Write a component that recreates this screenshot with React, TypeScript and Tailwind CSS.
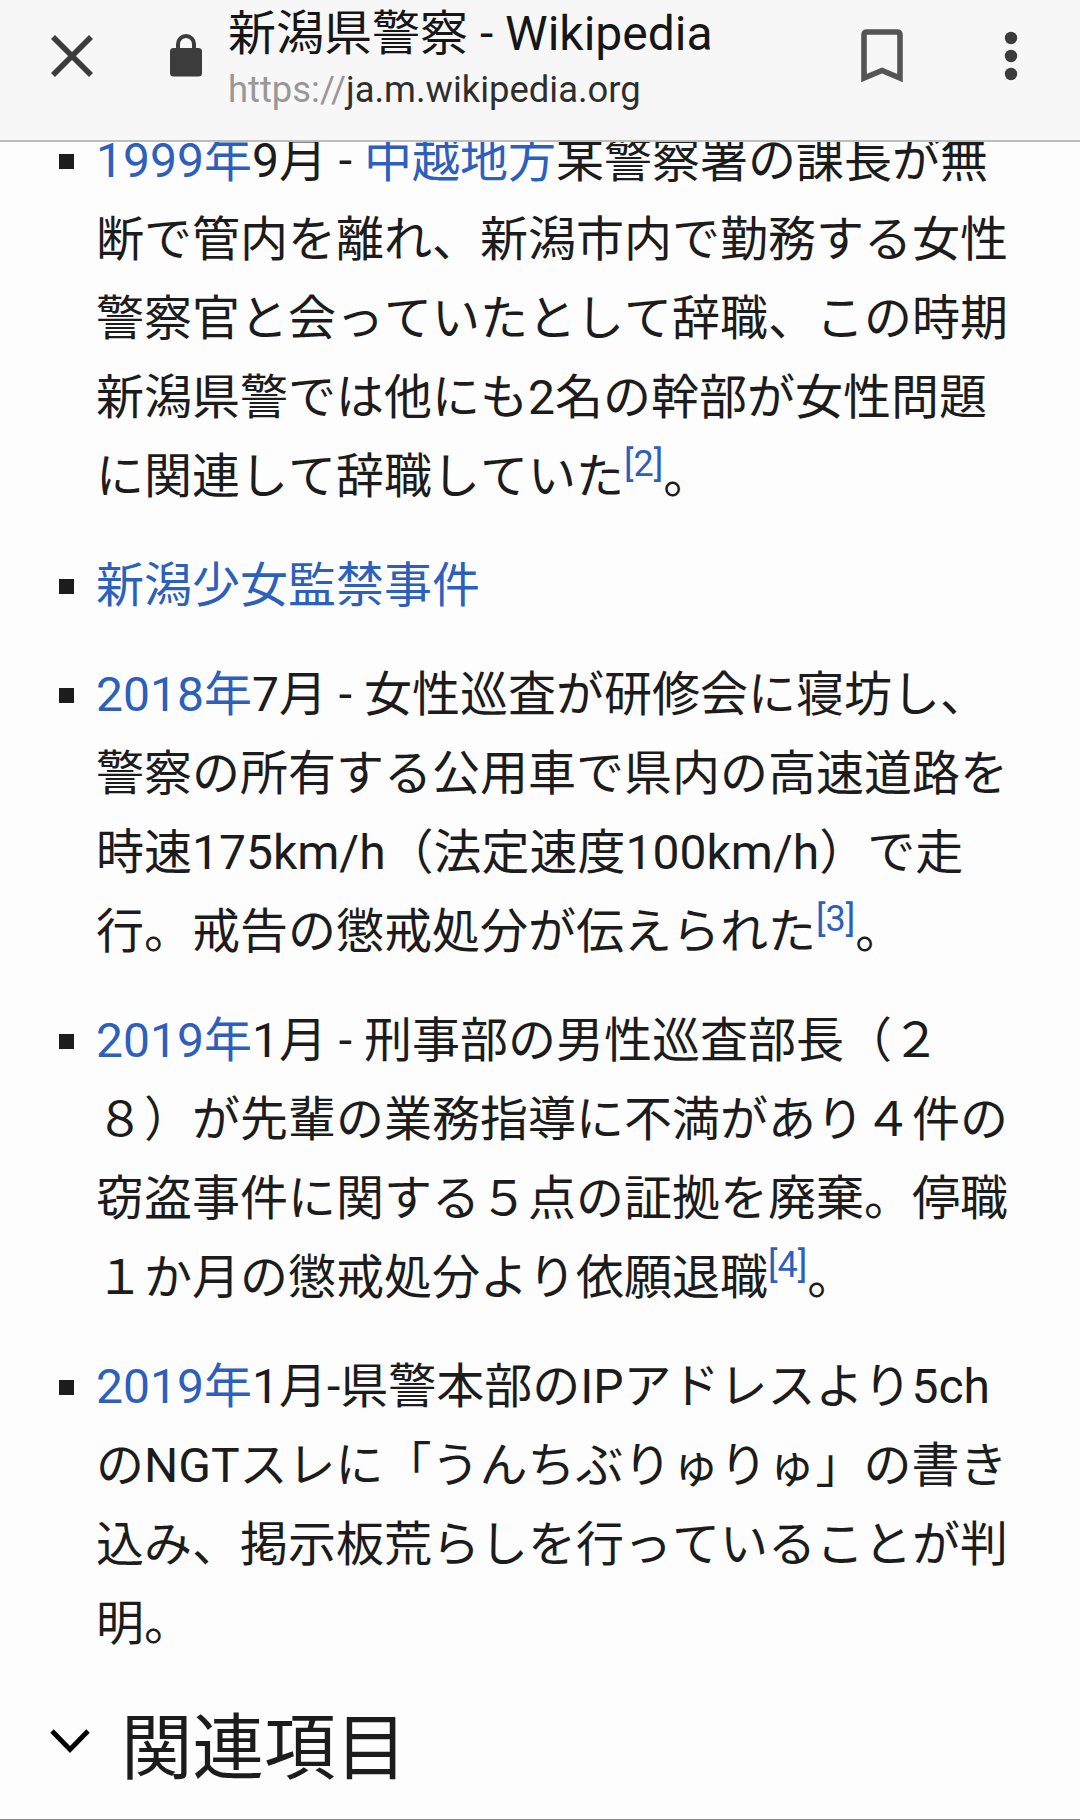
import React from 'react';

type Part = {
  text: string;
  type?: 'link' | 'ref';
};

const listHistory: Part[][][] = [
  [
    [
      { text: '1999年', type: 'link' },
      { text: '9月 - ' },
      { text: '中越地方', type: 'link' },
      { text: '某警察署の課長が無' },
    ],
    [{ text: '断で管内を離れ、新潟市内で勤務する女性' }],
    [{ text: '警察官と会っていたとして辞職、この時期' }],
    [{ text: '新潟県警では他にも2名の幹部が女性問題' }],
    [
      { text: 'に関連して辞職していた' },
      { text: '[2]', type: 'ref' },
      { text: '。' },
    ],
  ],
  [[{ text: '新潟少女監禁事件', type: 'link' }]],
  [
    [
      { text: '2018年', type: 'link' },
      { text: '7月 - 女性巡査が研修会に寝坊し、' },
    ],
    [{ text: '警察の所有する公用車で県内の高速道路を' }],
    [{ text: '時速175km/h（法定速度100km/h）で走' }],
    [
      { text: '行。戒告の懲戒処分が伝えられた' },
      { text: '[3]', type: 'ref' },
      { text: '。' },
    ],
  ],
  [
    [
      { text: '2019年', type: 'link' },
      { text: '1月 - 刑事部の男性巡査部長（２' },
    ],
    [{ text: '８）が先輩の業務指導に不満があり４件の' }],
    [{ text: '窃盗事件に関する５点の証拠を廃棄。停職' }],
    [
      { text: '１か月の懲戒処分より依願退職' },
      { text: '[4]', type: 'ref' },
      { text: '。' },
    ],
  ],
  [
    [
      { text: '2019年', type: 'link' },
      { text: '1月-県警本部のIPアドレスより5ch' },
    ],
    [{ text: 'のNGTスレに「うんちぶりゅりゅ」の書き' }],
    [{ text: '込み、掲示板荒らしを行っていることが判' }],
    [{ text: '明。' }],
  ],
];

const TextPart = ({ part }: { part: Part }) => {
  if (part.type === 'link') {
    return (
      <a href="#" className="text-[#2d5fbd]">
        {part.text}
      </a>
    );
  }
  if (part.type === 'ref') {
    return (
      <sup className="text-[36px] leading-none align-baseline -top-[17px]">
        <a href="#" className="text-[#2d5fbd]">
          {part.text}
        </a>
      </sup>
    );
  }
  return <>{part.text}</>;
};

const Toolbar = () => {
  return (
    <header className="relative z-10 flex h-[142px] shrink-0 border-b-2 border-[#bdbdbd] bg-[#f7f7f7] text-[#3c3c3c]">
      <svg viewBox="0 0 42 42" className="ml-[51px] mt-[35px] size-[42px]">
        <path d="M2 2L40 40M40 2L2 40" stroke="currentColor" strokeWidth="5.6" />
      </svg>
      <svg viewBox="0 0 32 43" className="ml-[77px] mt-[34px] h-[43px] w-[32px]">
        <rect y="14" width="32" height="28.5" rx="3.5" fill="currentColor" />
        <path
          d="M8 16V10a8 8 0 0 1 16 0V16"
          fill="none"
          stroke="currentColor"
          strokeWidth="4"
        />
      </svg>
      <div className="ml-[26px] w-[633px] whitespace-nowrap">
        <h1 className="mt-[6px] text-[48px] leading-[56px] text-[#161616]">
          新潟県警察 - Wikipedia
        </h1>
        <p className="mt-[6px] text-[36.4px] leading-[44px] text-[#2e2e2e]">
          <span className="text-[#989898]">https://</span>ja.m.wikipedia.org
        </p>
      </div>
      <svg viewBox="0 0 42 54" className="mt-[29px] h-[54px] w-[42px] text-[#555]">
        <path
          d="M3 49V6Q3 3 6 3H36Q39 3 39 6V49L21 41.5Z"
          fill="none"
          stroke="currentColor"
          strokeWidth="5.6"
        />
      </svg>
      <svg viewBox="0 0 14 50" className="ml-[101px] mt-[31px] h-[50px] w-[14px]">
        <circle cx="7" cy="7" r="6.2" fill="currentColor" />
        <circle cx="7" cy="25" r="6.2" fill="currentColor" />
        <circle cx="7" cy="43" r="6.2" fill="currentColor" />
      </svg>
    </header>
  );
};

const App = () => {
  return (
    <div
      lang="ja"
      className="flex h-[1820px] w-[1080px] flex-col overflow-hidden border-b border-[#8a8a8a] bg-[#fdfdfd] font-['Roboto','Noto_Sans_CJK_JP',sans-serif] text-[#1c1c1c]"
    >
      <Toolbar />
      <main className="-mt-[21px]">
        <ul className="flex flex-col gap-[30px]">
          {listHistory.map((item, index) => (
            <li key={index} className="flex pl-[59px]">
              <span className="mt-[33px] mr-[22px] size-[15px] shrink-0 bg-[#1c1c1c]" />
              <div className="text-[48px] leading-[79px] whitespace-nowrap [font-kerning:none]">
                {item.map((line, i) => (
                  <div key={i} className="h-[79px]">
                    {line.map((part) => (
                      <TextPart key={part.text} part={part} />
                    ))}
                  </div>
                ))}
              </div>
            </li>
          ))}
        </ul>
        <div className="mt-[34px] flex">
          <svg viewBox="0 0 40 26" className="ml-[50px] mt-[32px] h-[26px] w-[40px] text-black">
            <path
              d="M2 2L20 20.5L38 2"
              fill="none"
              stroke="currentColor"
              strokeWidth="4.8"
            />
          </svg>
          <h2 className="ml-[31px] text-[71.5px] leading-[104px]">関連項目</h2>
        </div>
      </main>
    </div>
  );
};

export default App;
